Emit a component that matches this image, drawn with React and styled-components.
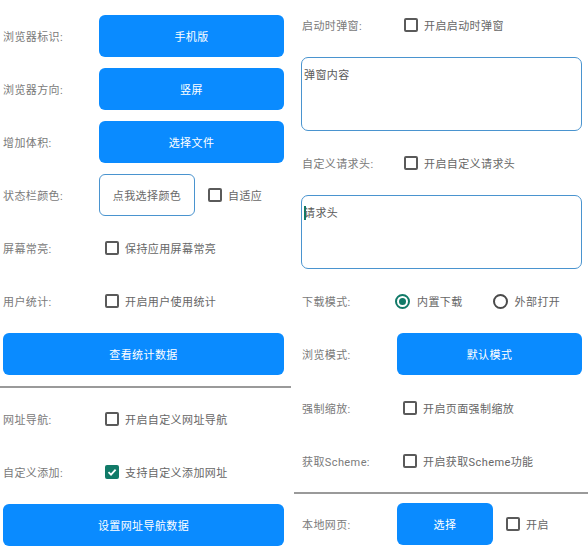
import styled, { createGlobalStyle } from 'styled-components';

const Global = createGlobalStyle`
  html, body { margin: 0; padding: 0; background: #fff; }
  body { font-family: Roboto, "Noto Sans CJK SC", "Noto Sans", sans-serif; }
`;

const Page = styled.div`
  display: flex;
  width: 588px;
  height: 549px;
  overflow: hidden;
  background: #fff;
`;

const Column = styled.div`
  display: flex;
  flex-direction: column;
  width: 294px;
  padding-top: ${p => p.$top}px;
  box-sizing: border-box;
`;

const Row = styled.div`
  display: flex;
  align-items: center;
  height: 42px;
  padding: 0 ${p => p.$right || 10}px 0 ${p => p.$left || 3}px;
  margin-bottom: ${p => (p.$gap ?? 11)}px;
  flex-shrink: 0;
`;

const Label = styled.div`
  width: ${p => p.$w}px;
  flex-shrink: 0;
  font-size: 11px;
  letter-spacing: 0.4px;
  color: #7a7a7a;
`;

const Button = styled.div`
  flex: ${p => (p.$w ? 'none' : '1')};
  width: ${p => (p.$w ? `${p.$w}px` : 'auto')};
  height: 42px;
  border-radius: 6px;
  background: #0a8bff;
  color: #fff;
  font-size: 11px;
  letter-spacing: 0.4px;
  display: flex;
  align-items: center;
  justify-content: center;
`;

const OutlineButton = styled.div`
  width: 94px;
  height: 40px;
  border: 1px solid #4a94cf;
  border-radius: 6px;
  color: #6a6a6a;
  font-size: 11px;
  letter-spacing: 0.4px;
  display: flex;
  align-items: center;
  justify-content: center;
  flex-shrink: 0;
`;

const Check = styled.div`
  display: flex;
  align-items: center;
  margin-left: ${p => p.$ml || 0}px;
  font-size: 11px;
  letter-spacing: 0.4px;
  color: #666;
`;

const Box = styled.span`
  width: 14px;
  height: 14px;
  box-sizing: border-box;
  border-radius: 2px;
  border: 2px solid ${p => (p.$on ? '#117a68' : '#5a5a5a')};
  background: ${p => (p.$on ? '#117a68' : 'transparent')};
  margin-right: 6px;
  display: flex;
  align-items: center;
  justify-content: center;
`;

const Radio = styled.span`
  width: 15px;
  height: 15px;
  box-sizing: border-box;
  border-radius: 50%;
  border: 2px solid ${p => (p.$on ? '#117a68' : '#4a4a4a')};
  margin-right: 7px;
  display: flex;
  align-items: center;
  justify-content: center;
  &::after {
    content: '';
    display: ${p => (p.$on ? 'block' : 'none')};
    width: 7px;
    height: 7px;
    border-radius: 50%;
    background: #117a68;
  }
`;

const TextArea = styled.div`
  margin: 0 6px 11px 7px;
  border: 1px solid #4a94cf;
  border-radius: 7px;
  padding: 8px 2px 4px;
  height: 60px;
  font-size: 11px;
  letter-spacing: 0.4px;
  color: #5a5a5a;
  flex-shrink: 0;
`;

const Cursor = styled.span`
  display: inline-block;
  width: 1.5px;
  height: 14px;
  background: #117a68;
  vertical-align: -3px;
  margin-right: -1.5px;
`;

const Divider = styled.div`
  height: 2px;
  background: #9a9a9a;
  width: ${p => p.$w}px;
  margin-bottom: ${p => p.$mb}px;
  flex-shrink: 0;
`;

const CheckBox = ({ on, children, ml }) => (
  <Check $ml={ml}>
    <Box $on={on}>
      {on && (
        <svg width="10" height="10" viewBox="0 0 10 10">
          <path d="M1.5 5.2 L4 7.6 L8.6 2.6" fill="none" stroke="#fff" strokeWidth="1.8" />
        </svg>
      )}
    </Box>
    {children}
  </Check>
);

const RadioItem = ({ on, children, ml }) => (
  <Check $ml={ml}>
    <Radio $on={on} />
    {children}
  </Check>
);

export default function App() {
  return (
    <Page>
      <Global />
      <Column $top={15}>
        <Row>
          <Label $w={96}>浏览器标识:</Label>
          <Button>手机版</Button>
        </Row>
        <Row>
          <Label $w={96}>浏览器方向:</Label>
          <Button>竖屏</Button>
        </Row>
        <Row>
          <Label $w={96}>增加体积:</Label>
          <Button>选择文件</Button>
        </Row>
        <Row>
          <Label $w={96}>状态栏颜色:</Label>
          <OutlineButton>点我选择颜色</OutlineButton>
          <CheckBox ml={13}>自适应</CheckBox>
        </Row>
        <Row>
          <Label $w={96}>屏幕常亮:</Label>
          <CheckBox ml={6}>保持应用屏幕常亮</CheckBox>
        </Row>
        <Row>
          <Label $w={96}>用户统计:</Label>
          <CheckBox ml={6}>开启用户使用统计</CheckBox>
        </Row>
        <Row>
          <Button>查看统计数据</Button>
        </Row>
        <Divider $w={291} $mb={10} />
        <Row>
          <Label $w={96}>网址导航:</Label>
          <CheckBox ml={6}>开启自定义网址导航</CheckBox>
        </Row>
        <Row>
          <Label $w={96}>自定义添加:</Label>
          <CheckBox ml={6} on>支持自定义添加网址</CheckBox>
        </Row>
        <Row>
          <Button>设置网址导航数据</Button>
        </Row>
      </Column>
      <Column $top={4}>
        <Row $left={8} $right={6}>
          <Label $w={102}>启动时弹窗:</Label>
          <CheckBox>开启启动时弹窗</CheckBox>
        </Row>
        <TextArea>弹窗内容</TextArea>
        <Row $left={8} $right={6}>
          <Label $w={102}>自定义请求头:</Label>
          <CheckBox>开启自定义请求头</CheckBox>
        </Row>
        <TextArea><Cursor />请求头</TextArea>
        <Row $left={8} $right={6}>
          <Label $w={93}>下载模式:</Label>
          <RadioItem on>内置下载</RadioItem>
          <RadioItem ml={30}>外部打开</RadioItem>
        </Row>
        <Row $left={8} $right={6} $gap={12}>
          <Label $w={95}>浏览模式:</Label>
          <Button>默认模式</Button>
        </Row>
        <Row $left={8} $right={6}>
          <Label $w={101}>强制缩放:</Label>
          <CheckBox>开启页面强制缩放</CheckBox>
        </Row>
        <Row $left={8} $right={6} $gap={10}>
          <Label $w={101}>获取Scheme:</Label>
          <CheckBox>开启获取Scheme功能</CheckBox>
        </Row>
        <Divider $w={294} $mb={9} />
        <Row $left={8} $right={6}>
          <Label $w={95}>本地网页:</Label>
          <Button $w={96}>选择</Button>
          <CheckBox ml={13}>开启</CheckBox>
        </Row>
      </Column>
    </Page>
  );
}
